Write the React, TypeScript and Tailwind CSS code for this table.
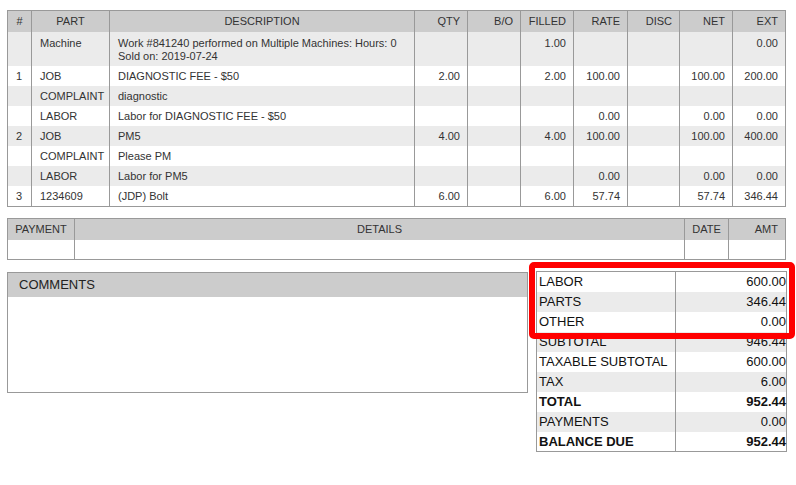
import React from "react";

type Row = {
  n?: string; part: string; desc: React.ReactNode; qty?: string; bo?: string; filled?: string;
  rate?: string; disc?: string; net?: string; ext?: string; tall?: boolean; last?: boolean;
};

const rows: Row[] = [
  { part: "Machine", desc: <>Work #841240 performed on Multiple Machines: Hours: 0<br />Sold on: 2019-07-24</>, filled: "1.00", ext: "0.00", tall: true },
  { n: "1", part: "JOB", desc: "DIAGNOSTIC FEE - $50", qty: "2.00", filled: "2.00", rate: "100.00", net: "100.00", ext: "200.00" },
  { part: "COMPLAINT", desc: "diagnostic" },
  { part: "LABOR", desc: "Labor for DIAGNOSTIC FEE - $50", rate: "0.00", net: "0.00", ext: "0.00" },
  { n: "2", part: "JOB", desc: "PM5", qty: "4.00", filled: "4.00", rate: "100.00", net: "100.00", ext: "400.00" },
  { part: "COMPLAINT", desc: "Please PM" },
  { part: "LABOR", desc: "Labor for PM5", rate: "0.00", net: "0.00", ext: "0.00" },
  { n: "3", part: "1234609", desc: "(JDP) Bolt", qty: "6.00", filled: "6.00", rate: "57.74", net: "57.74", ext: "346.44", last: true },
];

const totals: { label: string; value: string; bold?: boolean }[] = [
  { label: "LABOR", value: "600.00" },
  { label: "PARTS", value: "346.44" },
  { label: "OTHER", value: "0.00" },
  { label: "SUBTOTAL", value: "946.44" },
  { label: "TAXABLE SUBTOTAL", value: "600.00" },
  { label: "TAX", value: "6.00" },
  { label: "TOTAL", value: "952.44", bold: true },
  { label: "PAYMENTS", value: "0.00" },
  { label: "BALANCE DUE", value: "952.44", bold: true },
];

const th = "border-x border-[#999] font-normal h-[21px] p-0 align-middle";
const td = "border-x border-[#999] px-[8px] align-top";
const num = "border-x border-[#999] pr-[7px] text-right align-top";

export default function App() {
  return (
    <div className="w-[796px] h-[485px] bg-white font-['Liberation_Sans',Arial,sans-serif] text-[#333] pl-[7px] pt-[10px] overflow-hidden">
      <table className="table-fixed border-collapse w-[778px] text-[11px] leading-[13px] border border-[#999]">
        <colgroup>
          <col className="w-[24px]" />
          <col className="w-[78px]" />
          <col className="w-[305px]" />
          <col className="w-[53px]" />
          <col className="w-[53px]" />
          <col className="w-[53px]" />
          <col className="w-[54px]" />
          <col className="w-[52px]" />
          <col className="w-[53px]" />
          <col className="w-[53px]" />
        </colgroup>
        <thead>
          <tr className="bg-[#cccccc]">
            <th className={th + " text-center"}>#</th>
            <th className={th + " text-center"}>PART</th>
            <th className={th + " text-center"}>DESCRIPTION</th>
            <th className={th + " text-right pr-[7px]"}>QTY</th>
            <th className={th + " text-right pr-[7px]"}>B/O</th>
            <th className={th + " text-right pr-[7px]"}>FILLED</th>
            <th className={th + " text-right pr-[7px]"}>RATE</th>
            <th className={th + " text-right pr-[7px]"}>DISC</th>
            <th className={th + " text-right pr-[7px]"}>NET</th>
            <th className={th + " text-right pr-[7px]"}>EXT</th>
          </tr>
        </thead>
        <tbody>
          {rows.map((r, i) => {
            const bg = i % 2 === 0 ? "bg-[#ebebeb]" : "bg-white";
            const h = r.tall ? "h-[34px] pt-[5px]" : r.last ? "h-[21px] pt-[4px]" : "h-[20px] pt-[4px]";
            return (
              <tr key={i} className={bg}>
                <td className={`${td} ${h}`}>{r.n}</td>
                <td className={`${td} ${h}`}>{r.part}</td>
                <td className={`${td} ${h}`}>{r.desc}</td>
                <td className={`${num} ${h}`}>{r.qty}</td>
                <td className={`${num} ${h}`}>{r.bo}</td>
                <td className={`${num} ${h}`}>{r.filled}</td>
                <td className={`${num} ${h}`}>{r.rate}</td>
                <td className={`${num} ${h}`}>{r.disc}</td>
                <td className={`${num} ${h}`}>{r.net}</td>
                <td className={`${num} ${h}`}>{r.ext}</td>
              </tr>
            );
          })}
        </tbody>
      </table>

      <table className="table-fixed border-collapse w-[778px] mt-[11px] text-[11px] leading-[13px] border border-[#999]">
        <colgroup>
          <col className="w-[67px]" />
          <col className="w-[610px]" />
          <col className="w-[44px]" />
          <col className="w-[57px]" />
        </colgroup>
        <thead>
          <tr className="bg-[#cccccc]">
            <th className={th + " text-center"}>PAYMENT</th>
            <th className={th + " text-center"}>DETAILS</th>
            <th className={th + " text-center"}>DATE</th>
            <th className={th + " text-right pr-[7px]"}>AMT</th>
          </tr>
        </thead>
        <tbody>
          <tr className="bg-white">
            <td className="border-x border-[#999] h-[20px]"></td>
            <td className="border-x border-[#999] h-[20px]"></td>
            <td className="border-x border-[#999] h-[20px]"></td>
            <td className="border-x border-[#999] h-[20px]"></td>
          </tr>
        </tbody>
      </table>

      <div className="flex items-start mt-[10px]">
        <div className="w-[521px] h-[121px] border border-[#999] mt-[2px]">
          <div className="h-[24px] bg-[#cccccc] pl-[11px] text-[13px] leading-[24px] text-[#222]">COMMENTS</div>
        </div>
        <div className="relative ml-[8px] mt-[1px]">
          <table className="table-fixed border-collapse w-[250px] text-[13px] leading-[15px] text-[#111] border border-[#999]">
            <colgroup>
              <col className="w-[139px]" />
              <col className="w-[111px]" />
            </colgroup>
            <tbody>
              {totals.map((t, i) => (
                <tr key={t.label} className={i % 2 === 0 ? "bg-white" : "bg-[#ebebeb]"}>
                  <td className={`border-x border-[#999] h-[20px] pl-[2px] ${t.bold ? "font-bold" : ""}`}>{t.label}</td>
                  <td className={`border-x border-[#999] h-[20px] pr-0 text-right ${t.bold ? "font-bold" : ""}`}>{t.value}</td>
                </tr>
              ))}
            </tbody>
          </table>
          <div className="absolute left-[-7px] top-[-9px] w-[266px] h-[77px] border-[6px] border-[#ff0000] rounded-[5px] pointer-events-none" />
        </div>
      </div>
    </div>
  );
}
